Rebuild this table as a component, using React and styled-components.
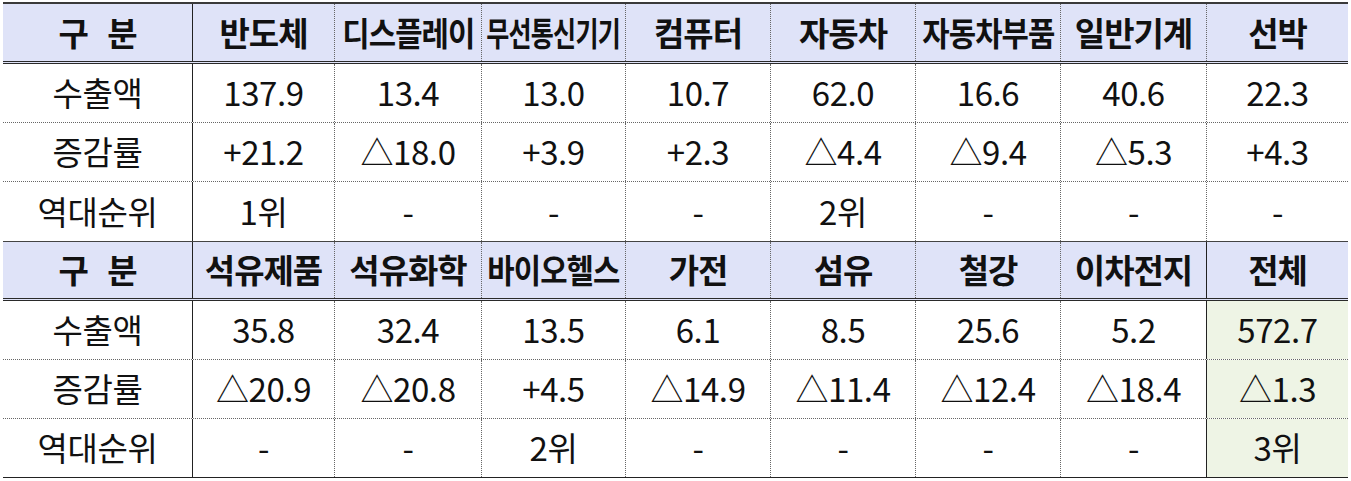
import React from "react";
import styled, { createGlobalStyle } from "styled-components";

const GlobalStyle = createGlobalStyle`
  html, body { margin: 0; padding: 0; background: #ffffff; }
  body { font-family: "Noto Sans CJK KR", "Noto Sans", sans-serif; color: #111; }
`;

const sections = [
  {
    heads: ["반도체", "디스플레이", "무선통신기기", "컴퓨터", "자동차", "자동차부품", "일반기계", "선박"],
    rows: [
      ["수출액", "137.9", "13.4", "13.0", "10.7", "62.0", "16.6", "40.6", "22.3"],
      ["증감률", "+21.2", "△18.0", "+3.9", "+2.3", "△4.4", "△9.4", "△5.3", "+4.3"],
      ["역대순위", "1위", "-", "-", "-", "2위", "-", "-", "-"],
    ],
    total: false,
  },
  {
    heads: ["석유제품", "석유화학", "바이오헬스", "가전", "섬유", "철강", "이차전지", "전체"],
    rows: [
      ["수출액", "35.8", "32.4", "13.5", "6.1", "8.5", "25.6", "5.2", "572.7"],
      ["증감률", "△20.9", "△20.8", "+4.5", "△14.9", "△11.4", "△12.4", "△18.4", "△1.3"],
      ["역대순위", "-", "-", "2위", "-", "-", "-", "-", "3위"],
    ],
    total: true,
  },
];

// 긴 항목명은 칸 폭에 맞게 가로로 줄임
const squeezeFor = (text) => (text.length >= 6 ? 0.76 : text.length === 5 ? 0.9 : 1);

const ExportTable = () => (
  <Wrap>
    <Table>
      {sections.map((sec, si) => (
        <React.Fragment key={si}>
          <Row $kind="head" $first={si === 0}>
            <Cell $bold>구&nbsp;&nbsp;&nbsp;분</Cell>
            {sec.heads.map((h, i) => (
              <Cell
                key={h}
                $bold
                $line={i === 0 || (sec.total && i === 7) ? "solid" : "dotted"}
              >
                <Squeeze $scale={squeezeFor(h)}>{h}</Squeeze>
              </Cell>
            ))}
          </Row>
          {sec.rows.map((r, ri) => (
            <Row key={ri} $kind={ri === 2 ? (si === 0 ? "sectionEnd" : "last") : "data"}>
              {r.map((v, ci) => (
                <Cell
                  key={ci}
                  $line={ci === 0 ? "none" : ci === 1 || (sec.total && ci === 8) ? "solid" : "dotted"}
                  $green={sec.total && ci === 8}
                >
                  {v}
                </Cell>
              ))}
            </Row>
          ))}
        </React.Fragment>
      ))}
    </Table>
  </Wrap>
);

export default function App() {
  return (
    <>
      <GlobalStyle />
      <ExportTable />
    </>
  );
}

// --- Styled Components ---
const Wrap = styled.div`
  padding: 2px 3px 0 3px;
`;
const Table = styled.div`
  width: 1345px;
  display: flex;
  flex-direction: column;
  border-top: 2px solid #3a3a3a;
`;
const Row = styled.div`
  display: grid;
  grid-template-columns: 189px 142px 147px 144px 145px 145px 145px 146px 142px;
  box-sizing: border-box;
  height: ${({ $kind }) => ($kind === "head" ? "60px" : "59px")};
  background: ${({ $kind }) => ($kind === "head" ? "#dfe3f8" : "#ffffff")};
  border-top: ${({ $kind, $first }) => ($kind === "head" && !$first ? "1px solid #444" : "none")};
  border-bottom: ${({ $kind }) =>
    $kind === "head"
      ? "3px double #2a2a2a"
      : $kind === "data"
      ? "1px dotted #666"
      : $kind === "last"
      ? "1px solid #222"
      : "none"};
`;
const Cell = styled.div`
  display: flex;
  align-items: center;
  justify-content: center;
  white-space: nowrap;
  overflow: visible;
  font-size: 33px;
  font-weight: ${({ $bold }) => ($bold ? 700 : 400)};
  letter-spacing: ${({ $bold }) => ($bold ? "-1px" : "-0.4px")};
  background: ${({ $green }) => ($green ? "#eef4e5" : "transparent")};
  border-left: ${({ $line }) =>
    $line === "solid" ? "1px solid #222" : $line === "dotted" ? "1px dotted #666" : "none"};
  padding-bottom: 2px;
`;
const Squeeze = styled.span`
  display: inline-block;
  transform: scaleX(${({ $scale }) => $scale});
`;
